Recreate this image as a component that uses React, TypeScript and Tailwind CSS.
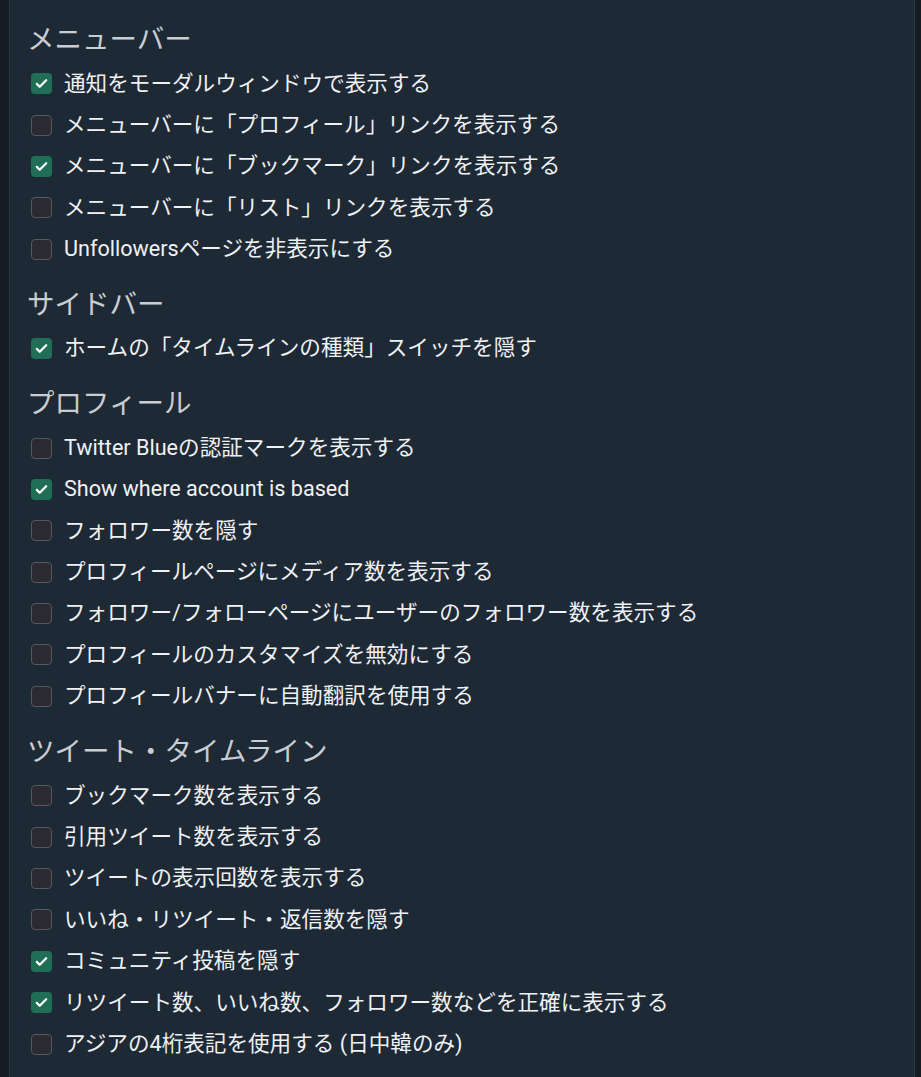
import React from "react";

interface Option {
  label: string;
  checked: boolean;
}

interface Section {
  title: string;
  options: Option[];
}

const sections: Section[] = [
  {
    title: "メニューバー",
    options: [
      { label: "通知をモーダルウィンドウで表示する", checked: true },
      { label: "メニューバーに「プロフィール」リンクを表示する", checked: false },
      { label: "メニューバーに「ブックマーク」リンクを表示する", checked: true },
      { label: "メニューバーに「リスト」リンクを表示する", checked: false },
      { label: "Unfollowersページを非表示にする", checked: false },
    ],
  },
  {
    title: "サイドバー",
    options: [{ label: "ホームの「タイムラインの種類」スイッチを隠す", checked: true }],
  },
  {
    title: "プロフィール",
    options: [
      { label: "Twitter Blueの認証マークを表示する", checked: false },
      { label: "Show where account is based", checked: true },
      { label: "フォロワー数を隠す", checked: false },
      { label: "プロフィールページにメディア数を表示する", checked: false },
      { label: "フォロワー/フォローページにユーザーのフォロワー数を表示する", checked: false },
      { label: "プロフィールのカスタマイズを無効にする", checked: false },
      { label: "プロフィールバナーに自動翻訳を使用する", checked: false },
    ],
  },
  {
    title: "ツイート・タイムライン",
    options: [
      { label: "ブックマーク数を表示する", checked: false },
      { label: "引用ツイート数を表示する", checked: false },
      { label: "ツイートの表示回数を表示する", checked: false },
      { label: "いいね・リツイート・返信数を隠す", checked: false },
      { label: "コミュニティ投稿を隠す", checked: true },
      { label: "リツイート数、いいね数、フォロワー数などを正確に表示する", checked: true },
      { label: "アジアの4桁表記を使用する (日中韓のみ)", checked: false },
    ],
  },
];

function Checkbox({ checked }: { checked: boolean }) {
  if (checked) {
    return (
      <span className="flex h-[21px] w-[21px] shrink-0 items-center justify-center rounded-[4px] bg-[#1f6e55]">
        <svg viewBox="0 0 16 16" className="h-[15px] w-[15px]" fill="none">
          <path
            d="M3 8.4l3.1 3.1L13 4.6"
            stroke="#ffffff"
            strokeWidth="2.4"
            strokeLinecap="round"
            strokeLinejoin="round"
          />
        </svg>
      </span>
    );
  }
  return (
    <span className="h-[21px] w-[21px] shrink-0 rounded-[4px] border border-[#56585e] bg-[#2a2a30]" />
  );
}

export default function App() {
  return (
    <div
      className="min-h-screen bg-[#151c24] pl-[9px] pr-[6px]"
      style={{ fontFamily: 'Roboto, "Noto Sans CJK JP", sans-serif' }}
    >
      <div className="min-h-[1077px] border-x border-[#2d3742] bg-[#1e2936] pl-[17px] pt-[16px]">
        {sections.map((section, i) => (
          <div key={section.title} className={i === 0 ? "" : "mt-[11px]"}>
            <h2 className="flex h-[47px] items-center text-[27.5px] text-[#c9cdd2]">
              {section.title}
            </h2>
            {section.options.map((opt) => (
              <label
                key={opt.label}
                className="flex h-[41.4px] items-center gap-[12px] pl-[4px] text-[21.6px] text-[#f0f1f3]"
              >
                <Checkbox checked={opt.checked} />
                <span>{opt.label}</span>
              </label>
            ))}
          </div>
        ))}
      </div>
    </div>
  );
}
